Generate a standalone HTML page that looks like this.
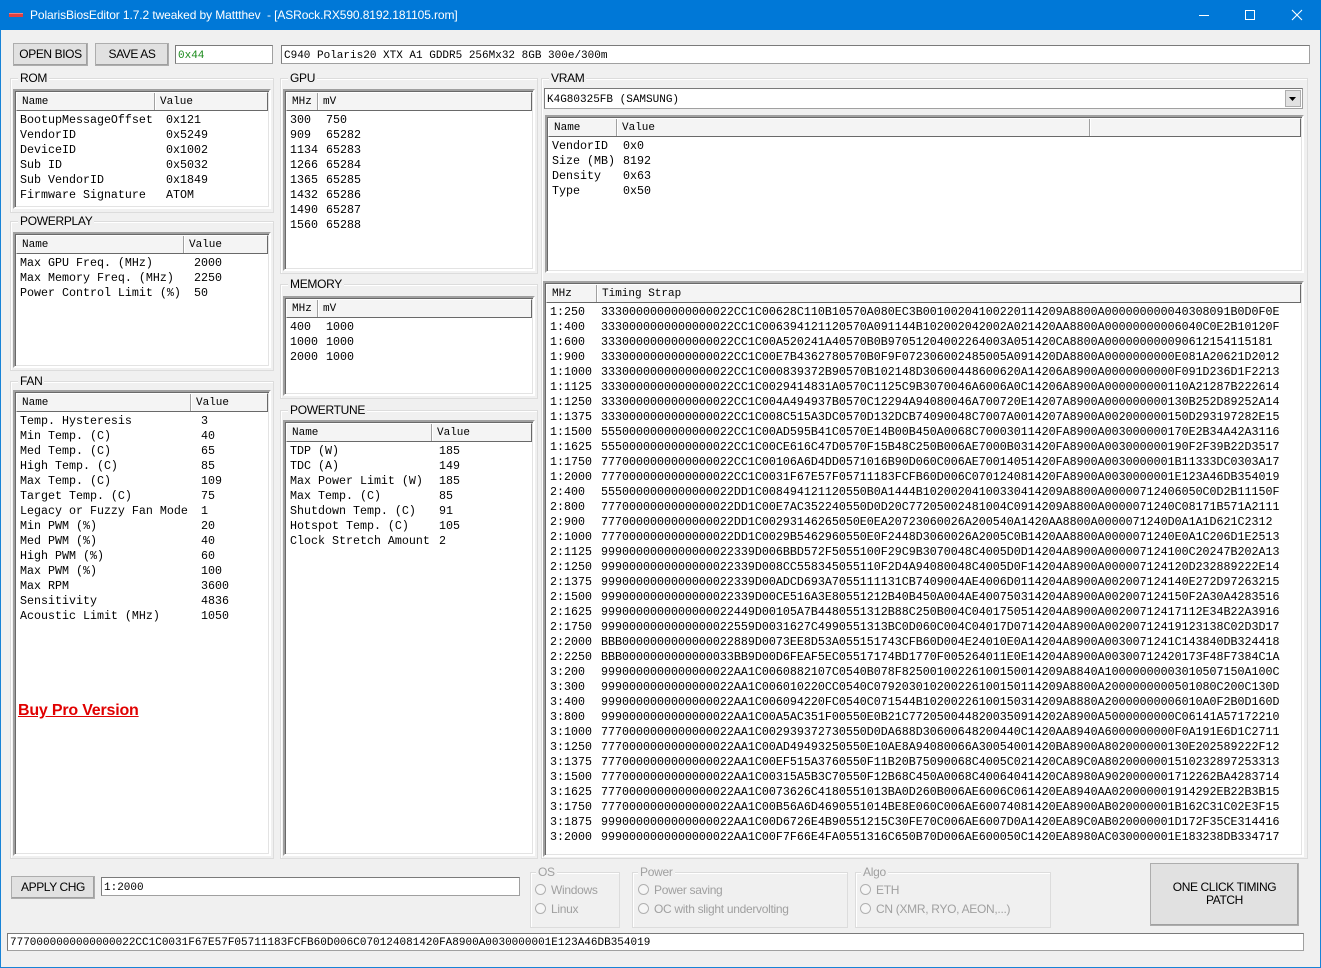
<!DOCTYPE html>
<html><head><meta charset="utf-8">
<style>
*{box-sizing:border-box;margin:0;padding:0}
body{width:1321px;height:968px;background:#f0f0f0;position:relative;overflow:hidden;font-family:"Liberation Sans",sans-serif;font-size:12px;color:#000}
.frame{position:absolute;left:0;top:0;width:1321px;height:968px;border:1px solid #1883d7;border-top:none}
.title{position:absolute;left:0;top:0;width:1321px;height:30px;background:#0078d7;color:#fff;font-size:12px}
.title .t{position:absolute;left:30px;top:8px;letter-spacing:-0.1px}
.title .ic{position:absolute;left:9px;top:13px;width:14px;height:4px;background:#e04040;border-top:1px solid #f08080}
.ctl{position:absolute;top:0;height:30px;width:46px}
.a{position:absolute}
.btn{position:absolute;background:#e1e1e1;border:1px solid #adadad;box-shadow:inset -1px -1px 0 #a0a0a0;text-align:center;font-size:12px;letter-spacing:-0.4px}
.tb{position:absolute;background:#fff;border:1px solid #a0a0a0;border-top-color:#7a7a7a;border-left-color:#7a7a7a;font-family:"Liberation Mono",monospace;font-size:11px;padding:4px 0 0 2px;white-space:pre;overflow:hidden}
.grp{position:absolute;border:1px solid #dcdcdc;box-shadow:inset 1px 1px 0 #fff}
.grp>.lb{position:absolute;left:7px;top:-8px;background:#f0f0f0;padding:0 2px;font-size:12px;letter-spacing:-0.3px}
.lv{position:absolute;background:#fff;border:2px solid;border-color:#a0a0a0 #fff #fff #a0a0a0;box-shadow:inset 1px 1px 0 #696969,inset -1px -1px 0 #e3e3e3;overflow:hidden}
.hd{position:absolute;left:1px;top:1px;right:1px;height:19px;background:#f4f4f4;border:1px solid #696969;border-top-color:#fff;border-left-color:#fff;font-family:"Liberation Mono",monospace;font-size:11px}
.hd span{position:absolute;top:0;height:17px;padding:3px 0 0 5px;border-right:1px solid #a0a0a0;box-shadow:1px 0 0 #fff}
.bd{position:absolute;left:1px;top:22px;right:0;font-family:"Liberation Mono",monospace;font-size:11.67px;white-space:pre}
.bd table{border-collapse:collapse}
.bd td{height:15px;padding:0 0 0 4px;vertical-align:middle;line-height:15px}
.rb{display:inline-block;width:11px;height:11px;border:1px solid #b0b0b0;border-radius:50%;vertical-align:-1px;margin-right:5px;background:#f6f6f6}
.dis{color:#a0a0a0;font-size:12px;letter-spacing:-0.3px}
</style></head><body>
<div class="frame"></div>
<div class="title"><div class="ic"></div><div class="t">PolarisBiosEditor 1.7.2 tweaked by Mattthev&nbsp; - [ASRock.RX590.8192.181105.rom]</div>
<svg class="ctl" style="left:1181px" viewBox="0 0 46 30"><path d="M18 15.5h10" stroke="#fff" stroke-width="1"/></svg>
<svg class="ctl" style="left:1227px" viewBox="0 0 46 30"><rect x="18.5" y="10.5" width="9" height="9" fill="none" stroke="#fff"/></svg>
<svg class="ctl" style="left:1274px" viewBox="0 0 46 30"><path d="M18 10l10 10M28 10l-10 10" stroke="#fff" stroke-width="1.1"/></svg>
</div>

<div class="btn" style="left:13px;top:43px;width:75px;height:23px;padding-top:3px">OPEN BIOS</div>
<div class="btn" style="left:95px;top:43px;width:74px;height:23px;padding-top:3px">SAVE AS</div>
<div class="tb" style="left:175px;top:45px;width:98px;height:19px;color:#1a8a1a">0x44</div>
<div class="tb" style="left:281px;top:45px;width:1029px;height:19px">C940 Polaris20 XTX A1 GDDR5 256Mx32 8GB 300e/300m</div>

<!-- ROM -->
<div class="grp" style="left:10px;top:78px;width:264px;height:135px"><div class="lb">ROM</div></div>
<div class="lv" style="left:13px;top:89px;width:258px;height:120px">
<div class="hd"><span style="left:0;width:138px">Name</span><span style="left:138px;width:118px">Value</span></div>
<div class="bd"><table><tr><td style="width:146px">BootupMessageOffset</td><td>0x121</td></tr><tr><td>VendorID</td><td>0x5249</td></tr><tr><td>DeviceID</td><td>0x1002</td></tr><tr><td>Sub ID</td><td>0x5032</td></tr><tr><td>Sub VendorID</td><td>0x1849</td></tr><tr><td>Firmware Signature</td><td>ATOM</td></tr></table></div></div>

<!-- POWERPLAY -->
<div class="grp" style="left:10px;top:221px;width:264px;height:150px"><div class="lb">POWERPLAY</div></div>
<div class="lv" style="left:13px;top:232px;width:258px;height:136px">
<div class="hd"><span style="left:0;width:167px">Name</span><span style="left:167px;width:89px">Value</span></div>
<div class="bd"><table><tr><td style="width:174px">Max GPU Freq. (MHz)</td><td>2000</td></tr><tr><td>Max Memory Freq. (MHz)</td><td>2250</td></tr><tr><td>Power Control Limit (%)</td><td>50</td></tr></table></div></div>

<!-- FAN -->
<div class="grp" style="left:10px;top:381px;width:264px;height:478px"><div class="lb">FAN</div></div>
<div class="lv" style="left:13px;top:390px;width:258px;height:466px">
<div class="hd"><span style="left:0;width:174px">Name</span><span style="left:174px;width:82px">Value</span></div>
<div class="bd"><table><tr><td style="width:181px">Temp. Hysteresis</td><td>3</td></tr><tr><td>Min Temp. (C)</td><td>40</td></tr><tr><td>Med Temp. (C)</td><td>65</td></tr><tr><td>High Temp. (C)</td><td>85</td></tr><tr><td>Max Temp. (C)</td><td>109</td></tr><tr><td>Target Temp. (C)</td><td>75</td></tr><tr><td>Legacy or Fuzzy Fan Mode</td><td>1</td></tr><tr><td>Min PWM (%)</td><td>20</td></tr><tr><td>Med PWM (%)</td><td>40</td></tr><tr><td>High PWM (%)</td><td>60</td></tr><tr><td>Max PWM (%)</td><td>100</td></tr><tr><td>Max RPM</td><td>3600</td></tr><tr><td>Sensitivity</td><td>4836</td></tr><tr><td>Acoustic Limit (MHz)</td><td>1050</td></tr></table></div>
<div class="a" style="left:1px;top:309px;width:131px;height:24px;background:#fff;padding:1px 0 0 2px;color:#e00000;font-weight:bold;font-size:16px;text-decoration:underline;letter-spacing:-0.2px">Buy Pro Version</div>
</div>

<!-- GPU -->
<div class="grp" style="left:280px;top:78px;width:258px;height:196px"><div class="lb">GPU</div></div>
<div class="lv" style="left:283px;top:89px;width:252px;height:182px">
<div class="hd"><span style="left:0;width:31px">MHz</span><span style="left:31px;width:219px">mV</span></div>
<div class="bd"><table><tr><td style="width:36px">300</td><td>750</td></tr><tr><td>909</td><td>65282</td></tr><tr><td>1134</td><td>65283</td></tr><tr><td>1266</td><td>65284</td></tr><tr><td>1365</td><td>65285</td></tr><tr><td>1432</td><td>65286</td></tr><tr><td>1490</td><td>65287</td></tr><tr><td>1560</td><td>65288</td></tr></table></div></div>

<!-- MEMORY -->
<div class="grp" style="left:280px;top:284px;width:258px;height:115px"><div class="lb">MEMORY</div></div>
<div class="lv" style="left:283px;top:296px;width:252px;height:100px">
<div class="hd"><span style="left:0;width:31px">MHz</span><span style="left:31px;width:219px">mV</span></div>
<div class="bd"><table><tr><td style="width:36px">400</td><td>1000</td></tr><tr><td>1000</td><td>1000</td></tr><tr><td>2000</td><td>1000</td></tr></table></div></div>

<!-- POWERTUNE -->
<div class="grp" style="left:280px;top:410px;width:258px;height:449px"><div class="lb">POWERTUNE</div></div>
<div class="lv" style="left:283px;top:420px;width:252px;height:436px">
<div class="hd"><span style="left:0;width:145px">Name</span><span style="left:145px;width:105px">Value</span></div>
<div class="bd"><table><tr><td style="width:149px">TDP (W)</td><td>185</td></tr><tr><td>TDC (A)</td><td>149</td></tr><tr><td>Max Power Limit (W)</td><td>185</td></tr><tr><td>Max Temp. (C)</td><td>85</td></tr><tr><td>Shutdown Temp. (C)</td><td>91</td></tr><tr><td>Hotspot Temp. (C)</td><td>105</td></tr><tr><td>Clock Stretch Amount</td><td>2</td></tr></table></div></div>

<!-- VRAM -->
<div class="grp" style="left:541px;top:78px;width:767px;height:781px"><div class="lb">VRAM</div></div>
<div class="tb" style="left:544px;top:88px;width:759px;height:21px;padding-top:5px">K4G80325FB (SAMSUNG)</div>
<div class="a" style="left:1285px;top:90px;width:16px;height:17px;background:#e1e1e1;border:1px solid #adadad"><svg width="14" height="15" viewBox="0 0 14 15"><path d="M3 6h7l-3.5 4z" fill="#000"/></svg></div>
<div class="lv" style="left:545px;top:115px;width:759px;height:158px">
<div class="hd"><span style="left:0;width:68px">Name</span><span style="left:68px;width:473px">Value</span><span style="left:541px;width:216px;border-right:none"></span></div>
<div class="bd"><table><tr><td style="width:71px">VendorID</td><td>0x0</td></tr><tr><td>Size (MB)</td><td>8192</td></tr><tr><td>Density</td><td>0x63</td></tr><tr><td>Type</td><td>0x50</td></tr></table></div></div>

<div class="lv" style="left:543px;top:281px;width:761px;height:576px">
<div class="hd"><span style="left:0;width:50px">MHz</span><span style="left:50px;width:709px;border-right:none">Timing Strap</span></div>
<div class="bd"><table>
<tr><td style="width:51px">1:250</td><td>3330000000000000022CC1C00628C110B10570A080EC3B00100204100220114209A8800A000000000040308091B0D0F0E</td></tr>
<tr><td>1:400</td><td>3330000000000000022CC1C006394121120570A091144B102002042002A021420AA8800A00000000006040C0E2B10120F</td></tr>
<tr><td>1:600</td><td>3330000000000000022CC1C00A520241A40570B0B97051204002264003A051420CA8800A000000000090612154115181</td></tr>
<tr><td>1:900</td><td>3330000000000000022CC1C00E7B4362780570B0F9F072306002485005A091420DA8800A0000000000E081A20621D2012</td></tr>
<tr><td>1:1000</td><td>3330000000000000022CC1C000839372B90570B102148D30600448600620A14206A8900A0000000000F091D236D1F2213</td></tr>
<tr><td>1:1125</td><td>3330000000000000022CC1C0029414831A0570C1125C9B3070046A6006A0C14206A8900A000000000110A21287B222614</td></tr>
<tr><td>1:1250</td><td>3330000000000000022CC1C004A494937B0570C12294A94080046A700720E14207A8900A000000000130B252D89252A14</td></tr>
<tr><td>1:1375</td><td>3330000000000000022CC1C008C515A3DC0570D132DCB74090048C7007A0014207A8900A002000000150D293197282E15</td></tr>
<tr><td>1:1500</td><td>5550000000000000022CC1C00AD595B41C0570E14B00B450A0068C70003011420FA8900A003000000170E2B34A42A3116</td></tr>
<tr><td>1:1625</td><td>5550000000000000022CC1C00CE616C47D0570F15B48C250B006AE7000B031420FA8900A003000000190F2F39B22D3517</td></tr>
<tr><td>1:1750</td><td>7770000000000000022CC1C00106A6D4DD0571016B90D060C006AE70014051420FA8900A0030000001B11333DC0303A17</td></tr>
<tr><td>1:2000</td><td>7770000000000000022CC1C0031F67E57F05711183FCFB60D006C070124081420FA8900A0030000001E123A46DB354019</td></tr>
<tr><td>2:400</td><td>5550000000000000022DD1C008494121120550B0A1444B10200204100330414209A8800A00000712406050C0D2B11150F</td></tr>
<tr><td>2:800</td><td>7770000000000000022DD1C00E7AC352240550D0D20C77205002481004C0914209A8800A0000071240C08171B571A2111</td></tr>
<tr><td>2:900</td><td>7770000000000000022DD1C00293146265050E0EA20723060026A200540A1420AA8800A0000071240D0A1A1D621C2312</td></tr>
<tr><td>2:1000</td><td>7770000000000000022DD1C0029B5462960550E0F2448D3060026A2005C0B1420AA8800A0000071240E0A1C206D1E2513</td></tr>
<tr><td>2:1125</td><td>9990000000000000022339D006BBD572F5055100F29C9B3070048C4005D0D14204A8900A000007124100C20247B202A13</td></tr>
<tr><td>2:1250</td><td>9990000000000000022339D008CC558345055110F2D4A94080048C4005D0F14204A8900A000007124120D232889222E14</td></tr>
<tr><td>2:1375</td><td>9990000000000000022339D00ADCD693A7055111131CB7409004AE4006D0114204A8900A002007124140E272D97263215</td></tr>
<tr><td>2:1500</td><td>9990000000000000022339D00CE516A3E80551212B40B450A004AE400750314204A8900A002007124150F2A30A4283516</td></tr>
<tr><td>2:1625</td><td>9990000000000000022449D00105A7B4480551312B88C250B004C0401750514204A8900A00200712417112E34B22A3916</td></tr>
<tr><td>2:1750</td><td>9990000000000000022559D0031627C4990551313BC0D060C004C04017D0714204A8900A00200712419123138C02D3D17</td></tr>
<tr><td>2:2000</td><td>BBB0000000000000022889D0073EE8D53A055151743CFB60D004E24010E0A14204A8900A0030071241C143840DB324418</td></tr>
<tr><td>2:2250</td><td>BBB0000000000000033BB9D00D6FEAF5EC05517174BD1770F005264011E0E14204A8900A00300712420173F48F7384C1A</td></tr>
<tr><td>3:200</td><td>9990000000000000022AA1C0060882107C0540B078F82500100226100150014209A8840A10000000003010507150A100C</td></tr>
<tr><td>3:300</td><td>9990000000000000022AA1C006010220CC0540C079203010200226100150114209A8800A2000000000501080C200C130D</td></tr>
<tr><td>3:400</td><td>9990000000000000022AA1C006094220FC0540C071544B10200226100150314209A8880A20000000006010A0F2B0D160D</td></tr>
<tr><td>3:800</td><td>9990000000000000022AA1C00A5AC351F00550E0B21C7720500448200350914202A8900A5000000000C06141A57172210</td></tr>
<tr><td>3:1000</td><td>7770000000000000022AA1C002939372730550D0DA688D30600648200440C1420AA8940A6000000000F0A191E6D1C2711</td></tr>
<tr><td>3:1250</td><td>7770000000000000022AA1C00AD49493250550E10AE8A94080066A30054001420BA8900A802000000130E202589222F12</td></tr>
<tr><td>3:1375</td><td>7770000000000000022AA1C00EF515A3760550F11B20B75090068C4005C021420CA89C0A8020000001510232897253313</td></tr>
<tr><td>3:1500</td><td>7770000000000000022AA1C00315A5B3C70550F12B68C450A0068C40064041420CA8980A9020000001712262BA4283714</td></tr>
<tr><td>3:1625</td><td>7770000000000000022AA1C0073626C4180551013BA0D260B006AE6006C061420EA8940AA020000001914292EB22B3B15</td></tr>
<tr><td>3:1750</td><td>7770000000000000022AA1C00B56A6D4690551014BE8E060C006AE60074081420EA8900AB020000001B162C31C02E3F15</td></tr>
<tr><td>3:1875</td><td>9990000000000000022AA1C00D6726E4B90551215C30FE70C006AE6007D0A1420EA89C0AB020000001D172F35CE314416</td></tr>
<tr><td>3:2000</td><td>9990000000000000022AA1C00F7F66E4FA0551316C650B70D006AE600050C1420EA8980AC030000001E183238DB334717</td></tr>
</table></div></div>

<!-- bottom -->
<div class="btn" style="left:11px;top:876px;width:84px;height:23px;padding-top:3px">APPLY CHG</div>
<div class="tb" style="left:101px;top:877px;width:419px;height:19px">1:2000</div>

<div class="grp" style="left:530px;top:872px;width:90px;height:56px"><div class="lb dis" style="left:5px">OS</div></div>
<div class="a dis" style="left:535px;top:883px"><span class="rb"></span>Windows</div>
<div class="a dis" style="left:535px;top:902px"><span class="rb"></span>Linux</div>
<div class="grp" style="left:632px;top:872px;width:216px;height:56px"><div class="lb dis" style="left:5px">Power</div></div>
<div class="a dis" style="left:638px;top:883px"><span class="rb"></span>Power saving</div>
<div class="a dis" style="left:638px;top:902px"><span class="rb"></span>OC with slight undervolting</div>
<div class="grp" style="left:855px;top:872px;width:196px;height:56px"><div class="lb dis" style="left:5px">Algo</div></div>
<div class="a dis" style="left:860px;top:883px"><span class="rb"></span>ETH</div>
<div class="a dis" style="left:860px;top:902px"><span class="rb"></span>CN (XMR, RYO, AEON,...)</div>

<div class="btn" style="left:1150px;top:863px;width:149px;height:63px;padding-top:17px;line-height:13px">ONE CLICK TIMING<br>PATCH</div>
<div class="tb" style="left:7px;top:933px;width:1297px;height:18px;padding-top:3px">7770000000000000022CC1C0031F67E57F05711183FCFB60D006C070124081420FA8900A0030000001E123A46DB354019</div>
</body></html>
